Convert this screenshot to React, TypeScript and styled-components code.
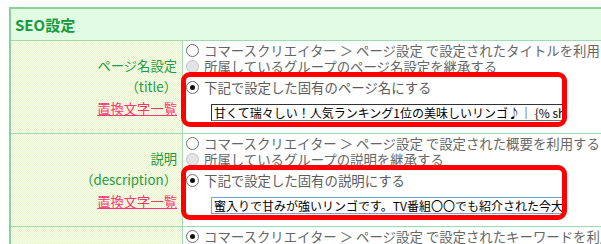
import styled, { createGlobalStyle } from "styled-components";

const GlobalStyle = createGlobalStyle`
  html, body {
    margin: 0;
    background: #ffffff;
    overflow: hidden;
  }
  body {
    font-family: "Noto Sans CJK JP", "Noto Sans", sans-serif;
  }
`;

const Page = styled.div`
  padding: 7px 0 0 9px;
  width: 760px;
`;

const Table = styled.div`
  border: 2px solid #8dd0a0;
  border-right: none;
  width: 740px;
`;

const Header = styled.div`
  height: 31px;
  display: flex;
  align-items: center;
  padding-left: 4px;
  background-color: #e2fbe3;
  color: #169a3c;
  font-size: 15px;
  font-weight: 700;
`;

const Row = styled.div`
  display: grid;
  grid-template-columns: 172px 1fr;
  border-top: 1px solid #9fd9ae;
`;

const LabelCell = styled.div`
  display: flex;
  flex-direction: column;
  justify-content: center;
  align-items: flex-end;
  padding-right: 5px;
  border-right: 1px solid #a5dcb2;
  background: repeating-conic-gradient(#e7f6c9 0 25%, #fafef0 0 50%) 0 0 / 2px 2px;
  color: #1d9b40;
  font-size: 13.3px;
  line-height: 21.5px;
  white-space: nowrap;
`;

const ReplaceLink = styled.a`
  color: #ff3370;
  text-decoration: underline;
  cursor: pointer;
`;

const ContentCell = styled.div`
  position: relative;
  padding: 1px 0 12px 3px;
`;

const Option = styled.label<{ $gap?: number }>`
  display: flex;
  align-items: center;
  gap: 5px;
  height: 16px;
  margin-top: ${(p) => p.$gap ?? 0}px;
  color: ${(p) => (p.$gap ? "#5c5c5c" : "#666666")};
  font-size: 13.4px;
  white-space: nowrap;
`;

const Radio = styled.span<{ $checked?: boolean; $disabled?: boolean }>`
  position: relative;
  flex: none;
  width: 13px;
  height: 13px;
  box-sizing: border-box;
  border-radius: 50%;
  border: 1px solid ${(p) => (p.$disabled ? "#c4c4c4" : "#6e6e6e")};
  background: ${(p) => (p.$disabled ? "#e4e4e4" : "#ffffff")};

  &::after {
    content: "";
    display: ${(p) => (p.$checked ? "block" : "none")};
    position: absolute;
    left: 3px;
    top: 3px;
    width: 5px;
    height: 5px;
    border-radius: 50%;
    background: #111111;
  }
`;

const TextField = styled.input<{ $focused?: boolean }>`
  display: block;
  margin: 9px 0 0 25px;
  width: 355px;
  height: 17px;
  box-sizing: border-box;
  padding: 0 2px;
  border: 1px solid ${(p) => (p.$focused ? "#7b9fd6" : "#767676")};
  border-top-color: ${(p) => (p.$focused ? "#7b9fd6" : "#333333")};
  border-left-color: ${(p) => (p.$focused ? "#7b9fd6" : "#333333")};
  background: #ffffff;
  color: #000000;
  font-family: "Noto Sans CJK JP", sans-serif;
  font-size: 12px;
  line-height: 15px;
  outline: none;
  overflow: hidden;
`;

const Highlight = styled.div`
  position: absolute;
  left: -2px;
  top: 31px;
  width: 386px;
  height: 55px;
  box-sizing: border-box;
  border: 5px solid #ff0000;
  border-radius: 9px;
  pointer-events: none;
`;

interface SeoRowProps {
  label: string;
  sub: string;
  inheritText: string;
  groupText: string;
  ownText: string;
  value: string;
  focused?: boolean;
}

const SeoRow = ({ label, sub, inheritText, groupText, ownText, value, focused }: SeoRowProps) => (
  <Row>
    <LabelCell>
      <span>{label}</span>
      <span>{sub}</span>
      <ReplaceLink>置換文字一覧</ReplaceLink>
    </LabelCell>
    <ContentCell>
      <Option>
        <Radio />
        {inheritText}
      </Option>
      <Option>
        <Radio $disabled />
        {groupText}
      </Option>
      <Option $gap={5}>
        <Radio $checked />
        {ownText}
      </Option>
      <TextField defaultValue={value} $focused={focused} readOnly />
      <Highlight />
    </ContentCell>
  </Row>
);

export default function App() {
  return (
    <>
      <GlobalStyle />
      <Page>
        <Table>
          <Header>SEO設定</Header>
          <SeoRow
            label="ページ名設定"
            sub="（title）"
            inheritText="コマースクリエイター ＞ ページ設定 で設定されたタイトルを利用する"
            groupText="所属しているグループのページ名設定を継承する"
            ownText="下記で設定した固有のページ名にする"
            value="甘くて瑞々しい！人気ランキング1位の美味しいリンゴ♪｜ {% shop_name %}"
          />
          <SeoRow
            label="説明"
            sub="（description）"
            inheritText="コマースクリエイター ＞ ページ設定 で設定された概要を利用する"
            groupText="所属しているグループの説明を継承する"
            ownText="下記で設定した固有の説明にする"
            value="蜜入りで甘みが強いリンゴです。TV番組〇〇でも紹介された今大人気の商品です。"
            focused
          />
          <Row>
            <LabelCell />
            <ContentCell>
              <Option>
                <Radio $checked />
                コマースクリエイター ＞ ページ設定 で設定されたキーワードを利用する
              </Option>
            </ContentCell>
          </Row>
        </Table>
      </Page>
    </>
  );
}
